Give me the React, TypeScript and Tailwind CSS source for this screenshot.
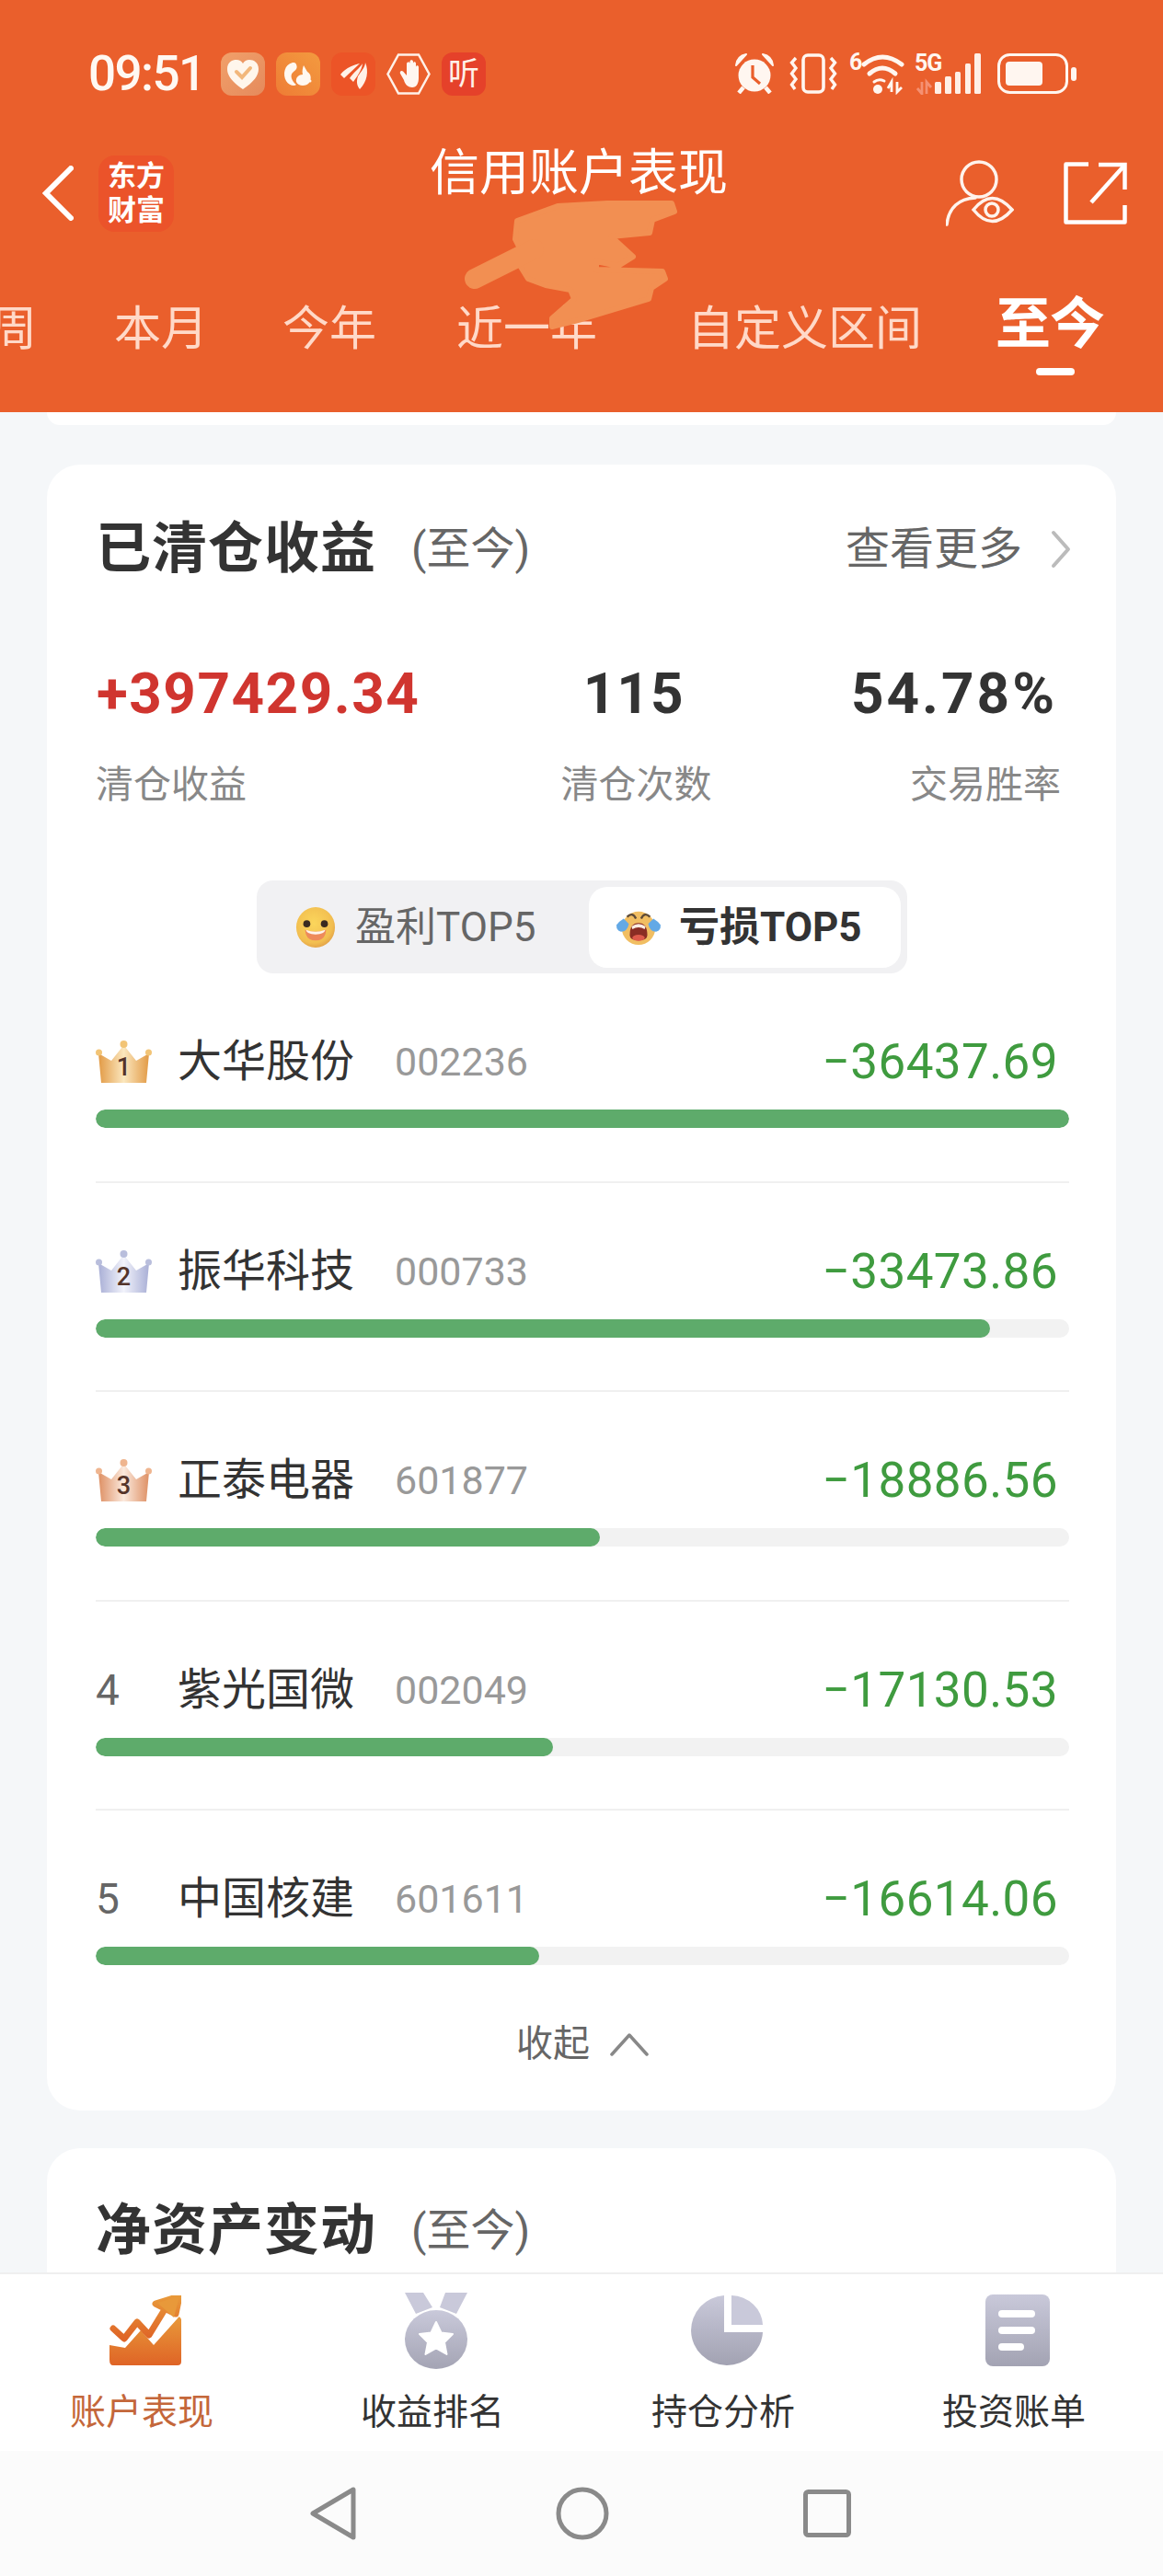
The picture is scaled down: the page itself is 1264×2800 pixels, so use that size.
import React from 'react';

const FONT = 'font-[Roboto,"Noto_Sans_CJK_SC",sans-serif]';

const tabs = [
  { label: '周', className: 'w-[51px] ml-[-11px]' },
  { label: '本月', className: 'w-[102px] ml-[84px]' },
  { label: '今年', className: 'w-[102px] ml-[81px]' },
  { label: '近一年', className: 'w-[153px] ml-[87px]' },
  { label: '自定义区间', className: 'w-[255px] ml-[98px]' },
];

const losers = [
  { rank: 1, name: '大华股份', code: '002236', value: '−36437.69', pct: 100 },
  { rank: 2, name: '振华科技', code: '000733', value: '−33473.86', pct: 91.87 },
  { rank: 3, name: '正泰电器', code: '601877', value: '−18886.56', pct: 51.83 },
  { rank: 4, name: '紫光国微', code: '002049', value: '−17130.53', pct: 47.01 },
  { rank: 5, name: '中国核建', code: '601611', value: '−16614.06', pct: 45.6 },
];

const crownColors: Record<number, [string, string, string]> = {
  1: ['#F2C476', '#FBE7BE', '#E29A45'],
  2: ['#B9BEDC', '#F2F3FB', '#A9AFD6'],
  3: ['#EFB58F', '#FBE9DD', '#DE9064'],
};

const Crown = ({ rank }: { rank: number }) => {
  const [edge, mid, dark] = crownColors[rank];
  const id = `crown-${rank}`;
  return (
    <div className="relative h-[46px] w-[61px]">
      <svg viewBox="0 0 61 46" className="h-full w-full">
        <defs>
          <linearGradient id={id} x1="0" x2="1" y1="0" y2="0">
            <stop offset="0" stopColor={dark} />
            <stop offset="0.5" stopColor={mid} />
            <stop offset="1" stopColor={dark} />
          </linearGradient>
        </defs>
        <path d="M6 46 L3 14 L17 22 L30.5 5 L44 22 L58 14 L55 46 Z" fill={`url(#${id})`} />
        <circle cx="3.5" cy="13" r="3.5" fill={edge} />
        <circle cx="30.5" cy="4" r="4" fill={edge} />
        <circle cx="57.5" cy="13" r="3.5" fill={edge} />
      </svg>
      <span className="absolute inset-x-0 top-[15px] text-center text-[27px] leading-[28px] font-medium text-[#54342A]">
        {rank}
      </span>
    </div>
  );
};

const SmileFace = () => (
  <svg viewBox="0 0 46 46" className="h-[44px] w-[46px]">
    <defs>
      <radialGradient id="smile" cx="0.45" cy="0.4" r="0.65">
        <stop offset="0" stopColor="#FBD65C" />
        <stop offset="0.75" stopColor="#F2BE50" />
        <stop offset="1" stopColor="#DF9B45" />
      </radialGradient>
    </defs>
    <ellipse cx="23" cy="23" rx="22" ry="23" fill="url(#smile)" />
    <circle cx="13" cy="19" r="4" fill="#3A2A20" />
    <circle cx="33" cy="19" r="4" fill="#3A2A20" />
    <path d="M11 26 Q23 30 35 26 Q34 38 23 38 Q12 38 11 26 Z" fill="#EE8A5A" />
    <path d="M12 26 Q23 30 34 26 Q33 31 23 31 Q13 31 12 26 Z" fill="#FFF4EC" />
  </svg>
);

const CryFace = () => (
  <svg viewBox="0 0 52 42" className="h-[40px] w-[52px]">
    <circle cx="26" cy="22" r="19" fill="#F1BE62" />
    <path d="M13 9 Q19 3 23 11 M39 9 Q33 3 29 11" fill="none" stroke="#5D4A38" strokeWidth="2.5" />
    <path d="M16 30 Q16 16 26 16 Q36 16 36 30 Q36 36 26 36 Q16 36 16 30 Z" fill="#8A2D24" />
    <path d="M18 20 Q26 14 34 20 L33 23 Q26 19 19 23 Z" fill="#FBEDE2" />
    <ellipse cx="26" cy="33" rx="7" ry="3.5" fill="#DE5A4B" />
    <path d="M9 11 L15 17 Q13 26 6 26 Q0 24 1 18 Q4 14 9 11 Z" fill="#63A9E6" />
    <path d="M43 11 L37 17 Q39 26 46 26 Q52 24 51 18 Q48 14 43 11 Z" fill="#63A9E6" />
  </svg>
);

const Heart = () => (
  <svg viewBox="0 0 48 47" className="h-full w-full">
    <path d="M24 40 C12 32 7 25 7 18 C7 11 12 8 17 8 C20 8 22.5 9.5 24 12 C25.5 9.5 28 8 31 8 C36 8 41 11 41 18 C41 25 36 32 24 40 Z" fill="#FFF6EC" />
    <path d="M17 21 L23 27 L32 17" fill="none" stroke="#F2B77B" strokeWidth="4" strokeLinecap="round" />
  </svg>
);

const Squirrel = () => (
  <svg viewBox="0 0 48 47" className="h-full w-full">
    <path d="M18 11 C9 13 7 24 11 31 C14 36 20 37 22 35 C17 31 15 25 18 22 C21 19 24 18 22 13 C21 11 20 11 18 11 Z" fill="#FFF8F0" />
    <path d="M30 14 L34 21 C38 23 39 29 36 33 C33 37 24 37 22 32 C21 27 25 24 29 24 C28 20 29 17 30 14 Z" fill="#FFF8F0" />
    <circle cx="37" cy="31" r="1.5" fill="#FFF8F0" />
  </svg>
);

const Feather = () => (
  <svg viewBox="0 0 48 47" className="h-full w-full">
    <path d="M10 24 C16 16 26 13 31 12 C26 17 20 22 14 28 Z" fill="#FFF1E8" />
    <path d="M20 28 C24 22 32 16 34 12 C33 20 28 26 24 32 Z" fill="#FFF1E8" />
    <path d="M31 40 C28 36 27 32 29 26 C32 21 37 16 37 11 C41 20 39 32 31 40 Z" fill="#FFF1E8" />
  </svg>
);

const HandHex = () => (
  <svg viewBox="0 0 48 47" className="h-full w-full">
    <path d="M13 2.5 H35 L46.5 23.5 L35 44.5 H13 L1.5 23.5 Z" fill="none" stroke="#FFF1E8" strokeWidth="2.5" />
    <path d="M15 23 L19 30 C20 35 24 38 28 38 C33 38 35 33 35 28 V16 C35 13.5 32 13.5 32 16 V12 C32 9.5 29 9.5 29 12 V10 C29 7.5 25.5 7.5 25.5 10 V12 C25.5 10 22 10 22 12.5 V25 L18 20.5 C16 19 14 21 15 23 Z" fill="#FFF6F0" />
  </svg>
);

const ListenBadge = () => (
  <div className="flex h-full w-full items-center justify-center rounded-[12px] bg-[#E5412A] text-[34px] leading-none text-[#FFF1E8]">
    听
  </div>
);

const StatusLeftIcons = () => (
  <div className="ml-[22px] flex gap-[12px]">
    <div className="h-[47px] w-[48px] rounded-[12px] bg-gradient-to-br from-[#F1A06A] to-[#E58A5C]">
      <Heart />
    </div>
    <div className="h-[47px] w-[48px] rounded-[12px] bg-gradient-to-tr from-[#EE7C35] to-[#F39A3F]">
      <Squirrel />
    </div>
    <div className="h-[47px] w-[48px] rounded-[12px] bg-[#EC5427]">
      <Feather />
    </div>
    <div className="h-[47px] w-[48px]">
      <HandHex />
    </div>
    <div className="h-[47px] w-[48px]">
      <ListenBadge />
    </div>
  </div>
);

const StatusRightIcons = () => (
  <div className="flex items-center">
    {/* alarm */}
    <svg viewBox="0 0 44 44" className="h-[44px] w-[44px]">
      <circle cx="22" cy="24" r="17.5" fill="#FFF6F0" />
      <path d="M2 13 Q3 3 13 1 Z M42 13 Q41 3 31 1 Z" fill="#FFF6F0" stroke="#FFF6F0" strokeWidth="2" strokeLinejoin="round" />
      <path d="M10 37 L5 43 M34 37 L39 43" stroke="#FFF6F0" strokeWidth="4.5" />
      <path d="M20 13 V26 L28 33" fill="none" stroke="#EA5F2C" strokeWidth="3.2" />
    </svg>
    {/* vibrate */}
    <svg viewBox="0 0 52 44" className="ml-[16px] h-[44px] w-[52px]" fill="none" stroke="#FFF6F0" strokeWidth="3.4">
      <rect x="15" y="2" width="22" height="40" rx="5" strokeWidth="3.6" />
      <path d="M7 5 L2.5 10 L7 16 L2.5 22 L7 28 L2.5 34 L6 39" />
      <path d="M45 5 L49.5 10 L45 16 L49.5 22 L45 28 L49.5 34 L46 39" />
    </svg>
    {/* wifi 6 */}
    <div className="relative ml-[13px] h-[45px] w-[60px]">
      <svg viewBox="0 0 60 45" className="h-full w-full" fill="none" stroke="#FFF6F0" strokeLinecap="round">
        <path d="M16 12 Q36 -4 57 12" strokeWidth="5" />
        <path d="M22 22 Q36 10 50 22" strokeWidth="5" />
        <path d="M27 31 Q32 27 38 30" strokeWidth="3" />
        <circle cx="31" cy="39" r="5" fill="#FFF6F0" stroke="none" />
        <path d="M46 42 V31 L42 38 M52 31 V42 L57 37" strokeWidth="2.8" strokeLinecap="butt" />
      </svg>
      <span className="absolute top-[-4px] left-0 text-[25px] leading-[28px] font-bold text-[#FFF6F0]">6</span>
    </div>
    {/* 5G signal */}
    <div className="relative ml-[11px] h-[45px] w-[72px]">
      <svg viewBox="0 0 72 45" className="h-full w-full">
        <path d="M8 31 V44 L3 38 M13 44 V31 L18 37" fill="none" stroke="#F59072" strokeWidth="2.8" />
        <rect x="22" y="31" width="7" height="13" rx="1.5" fill="#FFEFE6" />
        <rect x="33" y="25" width="7" height="19" rx="1.5" fill="#FFEFE6" />
        <rect x="44" y="20" width="6" height="24" rx="1.5" fill="#FFEFE6" />
        <rect x="55" y="11" width="6" height="33" rx="1.5" fill="#FFEFE6" />
        <rect x="65" y="0" width="7" height="44" rx="1.5" fill="#FFEFE6" />
      </svg>
      <span className="absolute top-[-3px] left-0 text-[25px] leading-[28px] font-bold tracking-[-1px] text-[#FFF6F0]">5G</span>
    </div>
    {/* battery */}
    <svg viewBox="0 0 86 44" className="ml-[18px] h-[44px] w-[86px]">
      <rect x="1.5" y="1.5" width="74" height="41" rx="12" fill="none" stroke="#FFF6F0" strokeWidth="3" />
      <rect x="9" y="9" width="40" height="26" rx="4" fill="#FFF6F0" />
      <rect x="80" y="15" width="6" height="15" rx="3" fill="#FFF6F0" />
    </svg>
  </div>
);

// Hand-painted smear hiding the account number
const ScribbleMask = () => (
  <svg viewBox="0 0 240 150" className="pointer-events-none absolute top-[215px] left-[500px] h-[150px] w-[240px]">
    <g fill="#F28F52" stroke="#F28F52" strokeLinecap="round" strokeLinejoin="round">
      <path
        d="M106 9 L160 6 L230 6 L233 15 L209 24 L206 38 L164 42 L188 64 L172 74 L148 69 L148 78 L220 80 L223 88 L208 98 L205 110 L132 132 L100 140 L100 131 L124 110 L120 100 L93 95 L74 88 L66 75 L66 57 L60 45 L62 25 Z"
        strokeWidth="6"
      />
      <path d="M16 88 L80 56" strokeWidth="22" fill="none" />
    </g>
  </svg>
);

const ChartIcon = () => (
  <svg viewBox="0 0 78 76" className="h-[76px] w-[78px]">
    <defs>
      <linearGradient id="chartFill" x1="0" x2="0" y1="0" y2="1">
        <stop offset="0" stopColor="#E8993A" />
        <stop offset="1" stopColor="#DF6426" />
      </linearGradient>
    </defs>
    <path d="M0 54 V70 Q0 76 4 76 H74 Q78 76 78 72 V26 Q76 21 74 25 L48 54 L34 38 L17 57 Z" fill="url(#chartFill)" />
    <path d="M4 36 L16 47 L30 29 L43 43 L62 12 M50 9 L76 1 L72 20 Z" fill="none" stroke="url(#chartFill)" strokeWidth="7" strokeLinejoin="round" strokeLinecap="round" />
    <path d="M52 8 L76 1 L70 24 Z" fill="#E8993A" />
  </svg>
);

const MedalIcon = () => (
  <svg viewBox="0 0 68 85" className="h-[85px] w-[68px]">
    <defs>
      <linearGradient id="medalFill" x1="0" x2="0" y1="0" y2="1">
        <stop offset="0" stopColor="#C9C9DA" />
        <stop offset="1" stopColor="#A4A4B4" />
      </linearGradient>
    </defs>
    <path d="M0 1 H20 L30 17 L12 24 Z M68 1 H44 L38 17 L56 24 Z" fill="#C9C9DA" />
    <ellipse cx="34" cy="52" rx="34" ry="32" fill="url(#medalFill)" />
    <path d="M34 33 L39.5 44.5 L52 46 L43 55 L45.5 68 L34 61.5 L22.5 68 L25 55 L16 46 L28.5 44.5 Z" fill="#fff" stroke="#fff" strokeWidth="2" strokeLinejoin="round" />
  </svg>
);

const PieIcon = () => (
  <svg viewBox="0 0 78 78" className="h-[78px] w-[78px]">
    <defs>
      <linearGradient id="pieFill" x1="0" x2="0" y1="0" y2="1">
        <stop offset="0" stopColor="#C9C9DA" />
        <stop offset="1" stopColor="#A2A2B2" />
      </linearGradient>
    </defs>
    <path d="M36 1 V41 H78 A39 38 0 1 1 36 1 Z" fill="url(#pieFill)" />
    <path d="M44 1 A35 33 0 0 1 78 33 H44 Z" fill="#C9C9DA" />
  </svg>
);

const BillIcon = () => (
  <div className="flex h-[78px] w-[70px] flex-col gap-[10px] rounded-[8px] bg-gradient-to-b from-[#C9C9DA] to-[#A3A3B3] pt-[17px] pl-[14px]">
    <div className="h-[8px] w-[40px] rounded-full bg-white" />
    <div className="h-[8px] w-[40px] rounded-full bg-white" />
    <div className="h-[8px] w-[28px] rounded-full bg-white" />
  </div>
);

const navItems = [
  { label: '账户表现', active: true, icon: <ChartIcon /> },
  { label: '收益排名', active: false, icon: <MedalIcon /> },
  { label: '持仓分析', active: false, icon: <PieIcon /> },
  { label: '投资账单', active: false, icon: <BillIcon /> },
];

export default function App() {
  return (
    <div className={`relative flex h-[2800px] w-[1264px] flex-col overflow-hidden bg-[#F5F7F9] ${FONT}`}>
      {/* Orange header */}
      <header className="h-[448px] shrink-0 overflow-hidden bg-[#EA5F2C] text-white">
        <div className="flex h-[160px] items-center justify-between pr-[94px] pl-[96px]">
          <div className="flex items-center">
            <span className="w-[122px] whitespace-nowrap text-[53px] leading-none font-medium tracking-[-1.6px] text-[#FFF8F2]">09:51</span>
            <StatusLeftIcons />
          </div>
          <StatusRightIcons />
        </div>

        <div className="grid h-[100px] grid-cols-[1fr_auto_1fr] items-center">
          <div className="flex items-center pl-[46px]">
            <svg viewBox="0 0 34 60" className="h-[60px] w-[34px]" fill="none" stroke="#fff" strokeWidth="6" strokeLinecap="round">
              <path d="M31 3 L4 30 L31 57" />
            </svg>
            <div className="ml-[27px] flex h-[83px] w-[82px] items-center justify-center rounded-[18px] bg-[#EB532A] text-center text-[31px] leading-[37px] font-bold">
              东方
              <br />
              财富
            </div>
          </div>
          <h1 className="mt-[2px] mr-[6px] self-start text-[54px] leading-[54px] font-normal">信用账户表现</h1>
          <div className="flex items-center justify-end gap-[54px] pr-[39px]">
            <svg viewBox="0 0 74 72" className="h-[72px] w-[74px]" fill="none" stroke="#FFF3EC" strokeWidth="3.5" strokeLinecap="round">
              <ellipse cx="36" cy="21" rx="19" ry="19" />
              <path d="M1 70 C3 52 14 42 32 41" />
              <path d="M30 55 Q50 30 72 55 Q50 80 30 55 Z" transform="translate(0 -1)" />
              <circle cx="50" cy="54" r="7" />
            </svg>
            <svg viewBox="0 0 69 68" className="h-[68px] w-[69px]" fill="none" stroke="#fff" strokeWidth="4.5">
              <path d="M27 2.5 H2.5 V65.5 H66.5 V47" strokeLinejoin="round" />
              <path d="M30 44 L65 5" />
              <path d="M38 3 H66.5 V30" />
            </svg>
          </div>
        </div>

        <div className="flex items-start whitespace-nowrap text-[51px] leading-[60px] text-[#FFD9C8]">
          {tabs.map((tab) => (
            <span key={tab.label} className={`mt-[68px] shrink-0 ${tab.className}`}>
              {tab.label}
            </span>
          ))}
          <div className="mt-[63px] ml-[80px] flex w-[118px] shrink-0 flex-col items-center">
            <span className="text-[60px] leading-[60px] font-bold tracking-[-1px] text-white">至今</span>
            <div className="mt-[17px] ml-[12px] h-[8px] w-[42px] rounded-full bg-white" />
          </div>
        </div>
      </header>

      <ScribbleMask />

      {/* Scrolling content */}
      <main className="flex-1 overflow-hidden">
        <div className="mx-[51px] h-[14px] rounded-b-[36px] bg-white" />

        <section className="mx-[51px] mt-[43px] rounded-[36px] bg-white pt-[62px] pr-[51px] pb-[50px] pl-[53px]">
          <div className="flex h-[60px] items-center">
            <h2 className="text-[60px] leading-[60px] font-bold tracking-[1px] text-[#333]">已清仓收益</h2>
            <span className="ml-[38px] text-[48px] leading-[60px] text-[#666]">(至今)</span>
            <span className="ml-auto text-[48px] leading-[60px] text-[#666]">查看更多</span>
            <svg viewBox="0 0 22 42" className="mr-[-2px] ml-[31px] h-[42px] w-[22px]" fill="none" stroke="#BBBBBB" strokeWidth="4" strokeLinecap="round" strokeLinejoin="round">
              <path d="M3 3 L19 21 L3 39" />
            </svg>
          </div>

          <div className="mt-[97px] flex h-[60px] items-center justify-between pr-[13px] pl-[1px]">
            <span className="text-[62px] leading-[60px] font-bold tracking-[1.5px] text-[#D0352F]">+397429.34</span>
            <span className="ml-[-4px] text-[62px] leading-[60px] font-bold tracking-[1px] text-[#333]">115</span>
            <span className="text-[62px] leading-[60px] font-bold tracking-[3px] text-[#333]">54.78%</span>
          </div>
          <div className="mt-[47px] flex h-[44px] items-center justify-between pr-[9px] text-[41px] leading-[44px] text-[#888]">
            <span>清仓收益</span>
            <span className="ml-[126px]">清仓次数</span>
            <span>交易胜率</span>
          </div>

          <div className="mt-[82px] ml-[175px] flex h-[101px] w-[707px] items-center rounded-[18px] bg-[#F1F1F3] pr-[7px]">
            <div className="flex items-center pl-[41px] text-[44px] leading-[50px] text-[#666]">
              <SmileFace />
              <span className="ml-[20px]">盈利TOP5</span>
            </div>
            <div className="ml-auto flex h-[88px] w-[339px] items-center rounded-[20px] bg-white pl-[28px] text-[44px] leading-[50px] font-bold text-[#333]">
              <CryFace />
              <span className="ml-[18px]">亏损TOP5</span>
            </div>
          </div>

          {losers.map((item) => (
            <div
              key={item.code}
              className={`pt-[66px] ${item.rank < 5 ? 'border-b-2 border-[#F0F0F0] pb-[57.5px]' : ''}`}
            >
              <div className="flex h-[60px] items-center">
                <div className="flex w-[89px] shrink-0 items-center">
                  {item.rank <= 3 ? (
                    <Crown rank={item.rank} />
                  ) : (
                    <span className="text-[46px] leading-[60px] text-[#666]">{item.rank}</span>
                  )}
                </div>
                <span className="text-[48px] leading-[60px] text-[#333]">{item.name}</span>
                <span className="ml-[44px] text-[43px] leading-[60px] text-[#999]">{item.code}</span>
                <span className="mr-[12px] ml-auto text-[53px] leading-[60px] tracking-[0.4px] text-[#3F9B3F]">{item.value}</span>
              </div>
              <div className="mt-[22px] h-[20px] w-full overflow-hidden rounded-full bg-[#F2F2F2]">
                <div className="h-full rounded-full bg-[#5EAB6B]" style={{ width: `${item.pct}%` }} />
              </div>
            </div>
          ))}

          <div className="mt-[64px] flex h-[44px] items-center justify-center text-[40px] leading-[44px] text-[#666]">
            <span>收起</span>
            <svg viewBox="0 0 42 26" className="ml-[22px] h-[26px] w-[42px]" fill="none" stroke="#888" strokeWidth="3.5" strokeLinecap="round" strokeLinejoin="round">
              <path d="M2 24 L21 3 L40 24" />
            </svg>
          </div>
        </section>

        <section className="mx-[51px] mt-[41px] rounded-[36px] bg-white pt-[60px] pr-[51px] pb-[52px] pl-[53px]">
          <div className="flex h-[60px] items-center">
            <h2 className="text-[60px] leading-[60px] font-bold tracking-[1px] text-[#333]">净资产变动</h2>
            <span className="ml-[38px] text-[48px] leading-[60px] text-[#666]">(至今)</span>
          </div>
        </section>
      </main>

      {/* Bottom tabs */}
      <nav className="flex h-[194px] shrink-0 border-t-2 border-[#EFEFEF] bg-white">
        <div className="-ml-[4px] grid grid-cols-[repeat(4,316px)]">
          {navItems.map((item) => (
            <div key={item.label} className="flex flex-col items-center">
              <div className="ml-[8px] flex h-[108px] items-center justify-center pt-[14px]">{item.icon}</div>
              <span className={`mt-[20px] text-[39px] leading-[44px] ${item.active ? 'text-[#C4673A]' : 'text-[#333]'}`}>
                {item.label}
              </span>
            </div>
          ))}
        </div>
      </nav>

      {/* Android system navigation */}
      <div className="flex h-[136px] shrink-0 items-start bg-[#FBFBFB] pt-[39px] pl-[337px]">
        <svg viewBox="0 0 50 58" className="h-[58px] w-[50px]" fill="none" stroke="#8A8A8A" strokeWidth="5" strokeLinejoin="round">
          <path d="M47 3 V55 L3 29 Z" />
        </svg>
        <svg viewBox="0 0 58 58" className="ml-[217px] h-[58px] w-[58px]" fill="none" stroke="#8A8A8A" strokeWidth="5">
          <circle cx="29" cy="29" r="26" />
        </svg>
        <svg viewBox="0 0 52 52" className="mt-[3px] ml-[211px] h-[52px] w-[52px]" fill="none" stroke="#8A8A8A" strokeWidth="5">
          <rect x="2.5" y="2.5" width="47" height="47" rx="3" />
        </svg>
      </div>
    </div>
  );
}
